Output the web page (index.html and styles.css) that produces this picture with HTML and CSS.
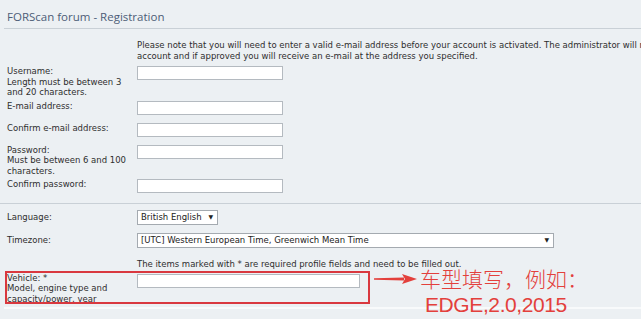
FILE: index.html
```html
<!DOCTYPE html>
<html lang="en">
<head>
  <meta charset="UTF-8">
  <title>FORScan forum - Registration</title>
  <link rel="stylesheet" href="styles.css">
</head>
<body>
  <div class="panel">
    <h2 class="title">FORScan forum - Registration</h2>

    <form class="reg-form">
      <div class="note">
        <div>Please note that you will need to enter a valid e-mail address before your account is activated. The administrator will review your</div>
        <div>account and if approved you will receive an e-mail at the address you specified.</div>
      </div>

      <div class="row">
        <label>Username:<span class="explain">Length must be between 3 and 20 characters.</span></label>
        <input type="text" class="field">
      </div>
      <div class="row">
        <label>E-mail address:</label>
        <input type="text" class="field">
      </div>
      <div class="row">
        <label>Confirm e-mail address:</label>
        <input type="text" class="field">
      </div>
      <div class="row">
        <label>Password:<span class="explain">Must be between 6 and 100 characters.</span></label>
        <input type="password" class="field">
      </div>
      <div class="row">
        <label>Confirm password:</label>
        <input type="password" class="field">
      </div>

      <hr class="divider">

      <div class="row select-row">
        <label>Language:</label>
        <div class="select lang"><span>British English</span><span class="caret">&#9660;</span></div>
      </div>
      <div class="row select-row">
        <label>Timezone:</label>
        <div class="select tz"><span>[UTC] Western European Time, Greenwich Mean Time</span><span class="caret">&#9660;</span></div>
      </div>

      <div class="required">The items marked with * are required profile fields and need to be filled out.</div>

      <div class="row vehicle">
        <label>Vehicle: *<span class="explain">Model, engine type and capacity/power, year</span></label>
        <input type="text" class="field wide">
        <div class="mark-box"></div>
        <svg class="arrow" width="44" height="12" viewBox="0 0 44 12">
          <path d="M0 5.2 L30 4.6 L30 7.4 L0 6.8 Z" fill="#e3403c"/>
          <path d="M28 1 L43 6 L28 11 L31 6 Z" fill="#e3403c"/>
        </svg>
        <div class="hint">
          <div class="hint-cn">车型填写，例如：</div>
          <div class="hint-en">EDGE,2.0,2015</div>
        </div>
      </div>
    </form>
  </div>
  <div class="next-panel"></div>
</body>
</html>
```

FILE: styles.css
```css
body {
  margin: 0;
  background-color: #ecf0f3;
  font-family: "DejaVu Sans", Verdana, sans-serif;
  font-size: 8.5px;
  color: #2e2e2e;
  overflow: hidden;
  width: 641px;
  height: 319px;
}
.panel {
  padding: 0 0 0 4px;
  height: 307px;
}
.title {
  margin: 0;
  padding: 9px 0 0 3px;
  height: 19px;
  border-bottom: 1px solid #c9d0d6;
  font-family: "Open Sans", sans-serif;
  font-size: 11.5px;
  font-weight: normal;
  color: #4c5d77;
}
.reg-form {
  padding: 11px 0 0 3px;
}
.note {
  margin-left: 130px;
  line-height: 10.5px;
  white-space: nowrap;
  overflow: hidden;
  margin-bottom: 5px;
}
.row {
  display: grid;
  grid-template-columns: 130px 1fr;
  align-items: start;
  min-height: 19px;
  margin-bottom: 3px;
  line-height: 10.5px;
  position: relative;
}
.select-row {
  margin-bottom: 4px;
}
.select-row label {
  padding-top: 2px;
}
.explain {
  display: block;
  width: 125px;
}
.field {
  box-sizing: border-box;
  width: 146px;
  height: 14px;
  margin: 0;
  padding: 0 2px;
  border: 1px solid #b4bac0;
  background-color: #fff;
  font: inherit;
}
.field.wide {
  width: 223px;
}
.divider {
  border: 0;
  border-top: 1px solid #c9d0d6;
  margin: 5px -4px 6px -7px;
}
.select {
  box-sizing: border-box;
  display: flex;
  justify-content: space-between;
  align-items: center;
  height: 15px;
  padding: 0 4px 0 3px;
  border: 1px solid #a4aab0;
  background-color: #fff;
  color: #222;
}
.select.lang {
  width: 81px;
}
.select.tz {
  width: 417px;
}
.caret {
  font-size: 6px;
  color: #222;
}
.required {
  margin: 7px 0 3px 130px;
  line-height: 10.5px;
}
.vehicle {
  min-height: 31px;
}
.vehicle .field {
  margin-top: 1px;
}
.mark-box {
  position: absolute;
  left: -2px;
  top: -2px;
  width: 361px;
  height: 29px;
  border: 2px solid #d9383f;
}
.arrow {
  position: absolute;
  left: 367px;
  top: 0;
}
.hint {
  position: absolute;
  left: 413px;
  top: -10px;
  color: #e3403c;
}
.hint-cn {
  font-family: "Noto Sans CJK SC", sans-serif;
  font-weight: 300;
  font-size: 21px;
  line-height: 30px;
  white-space: nowrap;
}
.hint-en {
  font-family: "Liberation Sans", Arial, sans-serif;
  font-size: 21px;
  line-height: 24px;
  letter-spacing: -0.4px;
  margin-left: 5px;
  white-space: nowrap;
}
.next-panel {
  margin-left: 4px;
  border-top: 2px solid #f8fafb;
  height: 10px;
}
```
